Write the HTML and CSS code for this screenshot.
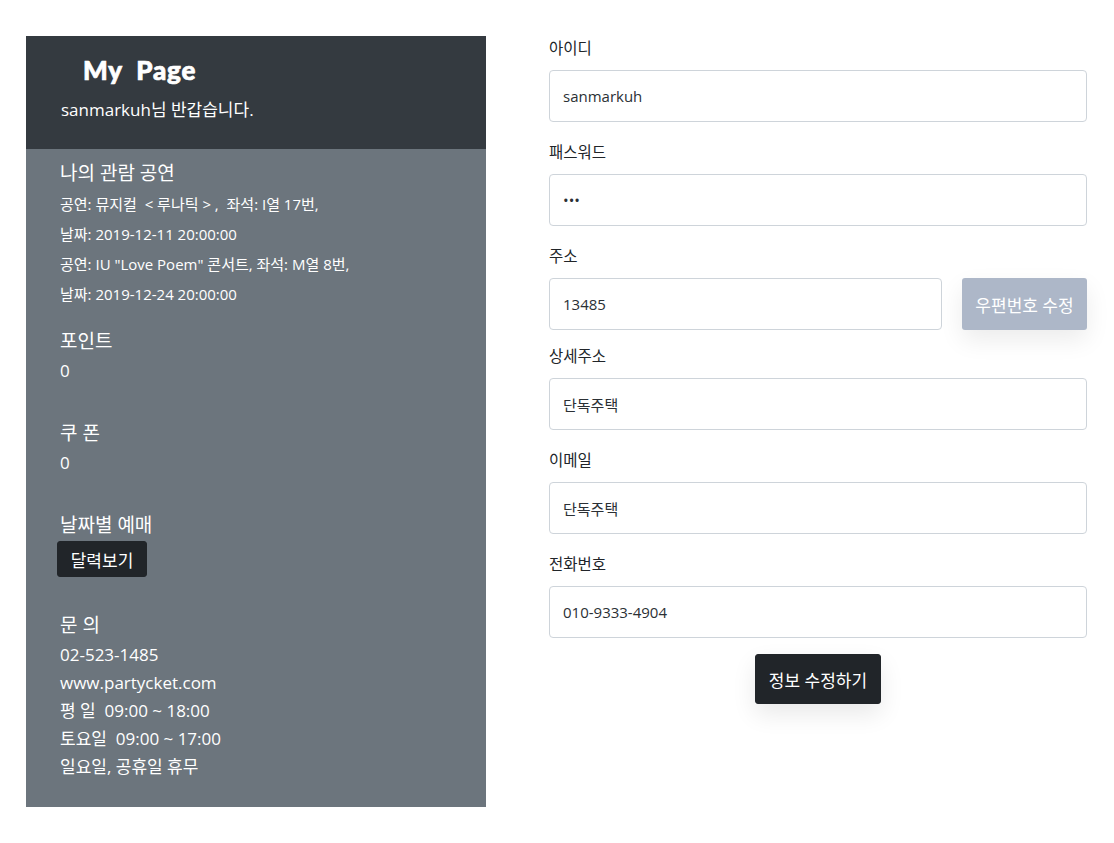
FILE: index.html
```html
<!DOCTYPE html>
<html lang="ko">
<head>
<meta charset="utf-8">
<title>My Page</title>
<link rel="stylesheet" href="styles.css">
</head>
<body>
<div class="page">
  <aside class="side">
    <div class="side-head">
      <h2 class="side-title">My&nbsp; Page</h2>
      <p class="greet">sanmarkuh님 반갑습니다.</p>
    </div>
    <div class="side-body">
      <section class="block block-shows">
        <h4 class="block-title">나의 관람 공연</h4>
        <p class="line">공연: 뮤지컬 &nbsp;&lt; 루나틱 &gt; , &nbsp;좌석: I열 17번,</p>
        <p class="line">날짜: 2019-12-11 20:00:00</p>
        <p class="line">공연: IU "Love Poem" 콘서트, 좌석: M열 8번,</p>
        <p class="line">날짜: 2019-12-24 20:00:00</p>
      </section>
      <section class="block block-first">
        <h4 class="block-title">포인트</h4>
        <p class="line">0</p>
      </section>
      <section class="block">
        <h4 class="block-title">쿠 폰</h4>
        <p class="line">0</p>
      </section>
      <section class="block">
        <h4 class="block-title">날짜별 예매</h4>
        <button class="btn-dark btn-sm" type="button">달력보기</button>
      </section>
      <section class="block">
        <h4 class="block-title">문 의</h4>
        <p class="line">02-523-1485</p>
        <p class="line">www.partycket.com</p>
        <p class="line">평 일 &nbsp;09:00 ~ 18:00</p>
        <p class="line">토요일 &nbsp;09:00 ~ 17:00</p>
        <p class="line">일요일, 공휴일 휴무</p>
      </section>
    </div>
  </aside>

  <form class="form">
    <div class="field">
      <label class="label">아이디</label>
      <input class="input" type="text" value="sanmarkuh">
    </div>
    <div class="field">
      <label class="label">패스워드</label>
      <input class="input" type="password" value="123">
    </div>
    <div class="field field-tight">
      <label class="label">주소</label>
      <div class="row">
        <input class="input" type="text" value="13485">
        <button class="btn-post" type="button">우편번호 수정</button>
      </div>
    </div>
    <div class="field">
      <label class="label">상세주소</label>
      <input class="input" type="text" value="단독주택">
    </div>
    <div class="field">
      <label class="label">이메일</label>
      <input class="input" type="text" value="단독주택">
    </div>
    <div class="field">
      <label class="label">전화번호</label>
      <input class="input" type="text" value="010-9333-4904">
    </div>
    <div class="actions">
      <button class="btn-dark btn-submit" type="button">정보 수정하기</button>
    </div>
  </form>
</div>
</body>
</html>
```

FILE: styles.css
```css
* { box-sizing: border-box; }

html, body {
  margin: 0;
  padding: 0;
  background: #ffffff;
}

body {
  font-family: "Open Sans", "Noto Sans CJK KR", sans-serif;
  font-size: 15px;
  color: #212529;
}

.page {
  display: flex;
  align-items: flex-start;
  gap: 63px;
  padding: 36px 26px 0 26px;
}

/* ---------- left panel ---------- */
.side {
  width: 460px;
  flex: none;
  color: #ffffff;
}

.side-head {
  background: #343a40;
  height: 113px;
  padding: 18px 35px 0 35px;
}

.side-title {
  margin: 0 0 0 22px;
  font-family: "Lato", "Noto Sans CJK KR", sans-serif;
  font-weight: 900;
  font-size: 26px;
  line-height: 32px;
  letter-spacing: 0.8px;
  -webkit-text-stroke: 0.7px #ffffff;
}

.greet {
  margin: 12px 0 0 0;
  font-size: 17px;
  line-height: 24px;
  white-space: nowrap;
}

.side-body {
  background: #6c757d;
  height: 658px;
  padding: 10px 34px 0 34px;
}

.block {
  margin-top: 34px;
}

.block-shows {
  margin-top: 0;
}

.block.block-first {
  margin-top: 18px;
}

.block-title {
  margin: 0 0 2px 0;
  font-size: 19px;
  font-weight: 400;
  line-height: 28px;
  white-space: nowrap;
}

.line {
  margin: 0;
  font-size: 17px;
  line-height: 28px;
  white-space: nowrap;
}

.block-shows .line {
  font-size: 15px;
  line-height: 30px;
}

.btn-dark {
  background: #212529;
  color: #ffffff;
  border: 1px solid #212529;
  border-radius: 3px;
  font-family: "Open Sans", "Noto Sans CJK KR", sans-serif;
}

.btn-sm {
  display: block;
  margin: 2px 0 0 -3px;
  width: 90px;
  height: 36px;
  font-size: 17px;
  padding: 0;
}

/* ---------- form ---------- */
.form {
  width: 538px;
  flex: none;
}

.field {
  margin-bottom: 18px;
}

.field-tight {
  margin-bottom: 14px;
}

.label {
  display: block;
  font-size: 15.5px;
  line-height: 24px;
  margin-bottom: 10px;
  color: #212529;
}

.input {
  display: block;
  width: 100%;
  height: 52px;
  border: 1px solid #ced4da;
  border-radius: 4px;
  padding: 0 13px;
  font-family: "Open Sans", "Noto Sans CJK KR", sans-serif;
  font-size: 15px;
  color: #2b3035;
  background: #ffffff;
}

.row {
  display: flex;
  gap: 20px;
}

.row .input {
  width: 393px;
  flex: none;
}

.btn-post {
  width: 125px;
  height: 52px;
  flex: none;
  background: #adb7c8;
  color: #ffffff;
  border: none;
  border-radius: 3px;
  font-family: "Open Sans", "Noto Sans CJK KR", sans-serif;
  font-size: 17px;
  padding: 0;
  box-shadow: 0 10px 24px rgba(0, 0, 0, 0.08);
}

.actions {
  display: flex;
  justify-content: center;
  margin-top: -2px;
}

.btn-submit {
  width: 126px;
  height: 50px;
  font-size: 17px;
  padding: 0;
  box-shadow: 0 10px 24px rgba(0, 0, 0, 0.09);
}
```
